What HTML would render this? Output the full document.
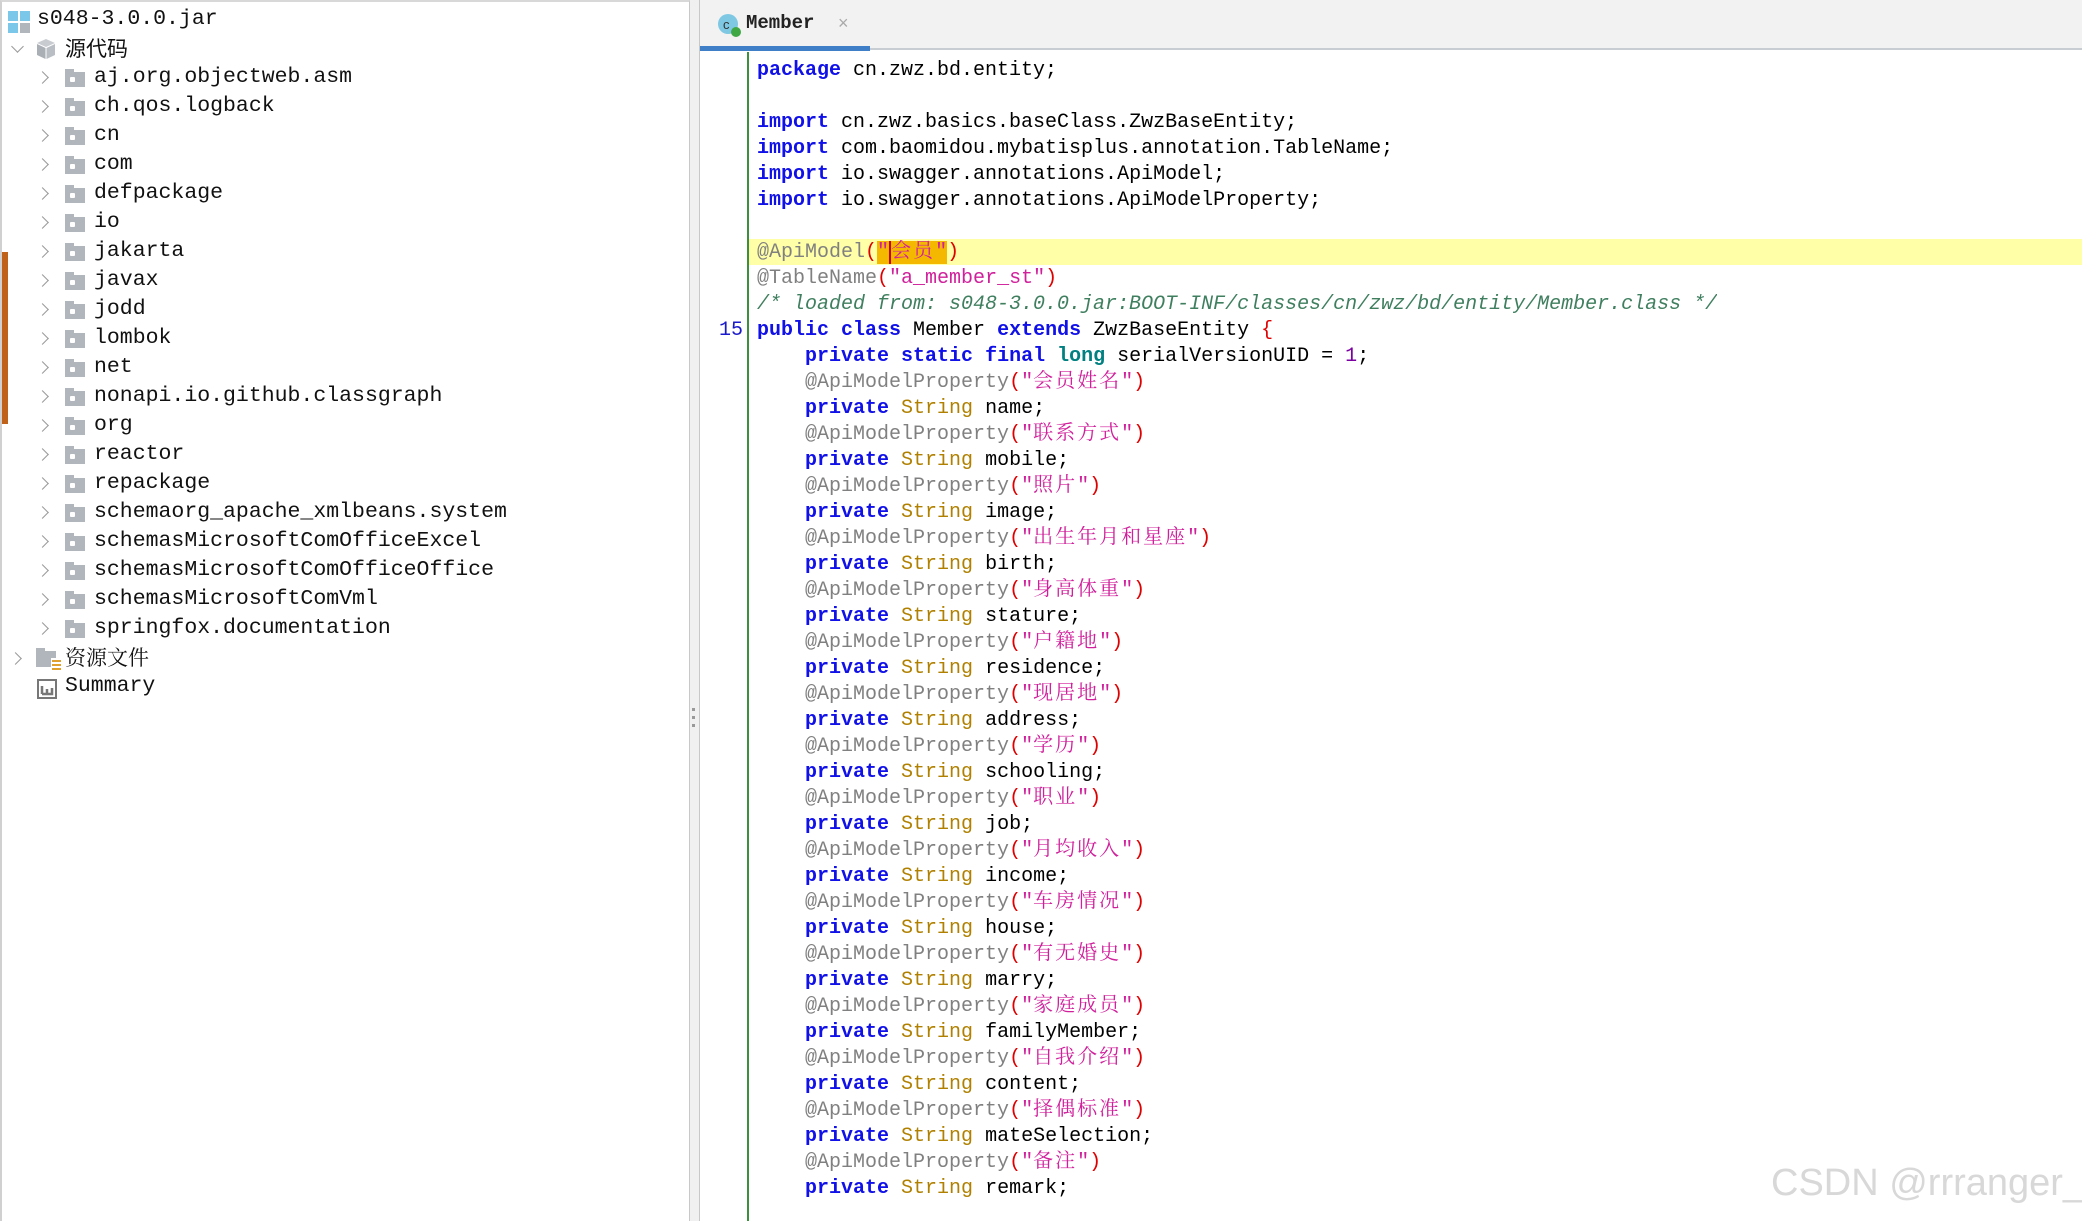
<!DOCTYPE html>
<html><head><meta charset="utf-8"><style>
*{margin:0;padding:0;box-sizing:border-box}
body{width:2082px;height:1221px;background:#fff;position:relative;overflow:hidden;font-family:"Liberation Mono","Noto Sans CJK SC",monospace}
#left{position:absolute;left:0;top:0;width:690px;height:1221px;background:#fff;border-top:2px solid #d8d8d8;border-left:2px solid #d0d0d0;border-right:1px solid #c8c8c8}
#split{position:absolute;left:690px;top:0;width:10px;height:1221px;background:#f0f0f0;border-right:1px solid #c8c8c8}
.row{position:absolute;height:29px;line-height:29px;font-size:21.5px;color:#111;white-space:pre}
.chev{position:absolute;width:9px;height:9px;border-right:1.5px solid #999;border-top:1.5px solid #999;transform:rotate(45deg)}
.fold{position:absolute;width:20px;height:15px;background:#b0b6bb}
.fold:before{content:"";position:absolute;left:0;top:-3px;width:9px;height:4px;background:#b0b6bb}
.fold:after{content:"";position:absolute;left:5px;top:5px;width:5px;height:5px;background:#fff;border-radius:1px}
#tabbar{position:absolute;left:700px;top:0;width:1382px;height:50px;background:#f2f2f2;border-bottom:2px solid #c8cdd3}
#code{position:absolute;left:757px;top:58px;font-size:20px;color:#000;white-space:pre}
.l{height:26px;line-height:26px;overflow:hidden}
.k{color:#1010e8;font-weight:bold}
.t{color:#008080;font-weight:bold}
.s{color:#b08000}
.a{color:#808080}
.q{color:#d0209c}
.p{color:#e00000}
.c{color:#3f7f5f;font-style:italic}
.n{color:#7a00a0}
.z{font-family:"Noto Serif CJK SC",serif;letter-spacing:2px;line-height:0}
</style></head><body>
<div id="left">
<div style="position:absolute;left:0;top:250px;width:6px;height:172px;background:#c0621a"></div>
<div style="position:absolute;left:6px;top:9px;width:10px;height:10px;background:#7bc7ea"></div>
<div style="position:absolute;left:18px;top:9px;width:10px;height:10px;background:#7bc7ea"></div>
<div style="position:absolute;left:6px;top:21px;width:10px;height:10px;background:#7bc7ea"></div>
<div style="position:absolute;left:18px;top:21px;width:10px;height:10px;background:#b0b6bb"></div>
<div class="row" style="left:35px;top:3px">s048-3.0.0.jar</div>
<div class="chev" style="left:11px;top:40px;transform:rotate(135deg)"></div>
<svg style="position:absolute;left:34px;top:36px" width="20" height="22" viewBox="0 0 20 22"><path d="M10 1 L19 5 L10 9 L1 5Z" fill="#c8ccd0"/><path d="M1 6 L9.5 10 L9.5 21 L1 17Z" fill="#a9afb5"/><path d="M10.5 10 L19 6 L19 17 L10.5 21Z" fill="#b8bec3"/></svg>
<div class="row" style="left:63px;top:32px;font-family:'Noto Sans CJK SC',sans-serif;font-size:21px">源代码</div>
<div id="pk"></div>
<div class="chev" style="left:9px;top:652px"></div>
<svg style="position:absolute;left:34px;top:645px" width="26" height="24"><rect x="0" y="4" width="20" height="16" fill="#b0b6bb"/><rect x="0" y="1" width="9" height="4" fill="#b0b6bb"/><rect x="15" y="11" width="11" height="13" fill="#fff"/><rect x="16" y="13" width="9" height="2" fill="#e0a030"/><rect x="16" y="17" width="9" height="2" fill="#e0a030"/><rect x="16" y="21" width="9" height="2" fill="#e0a030"/></svg>
<div class="row" style="left:63px;top:641px;font-family:'Noto Serif CJK SC',serif;font-size:21px">资源文件</div>
<svg style="position:absolute;left:35px;top:677px" width="20" height="20"><rect x="1" y="1" width="18" height="18" fill="none" stroke="#777" stroke-width="2"/><path d="M5 15 L5 7 M5 15 L15 15 L15 9 M10 15 L10 10" stroke="#777" stroke-width="2.5" fill="none"/></svg>
<div class="row" style="left:63px;top:670px">Summary</div>
</div>
<div id="split"><div style="position:absolute;left:2px;top:708px;width:3px;height:3px;background:#999"></div><div style="position:absolute;left:2px;top:716px;width:3px;height:3px;background:#999"></div><div style="position:absolute;left:2px;top:724px;width:3px;height:3px;background:#999"></div></div>
<div id="tabbar">
<svg style="position:absolute;left:18px;top:13px" width="24" height="26"><circle cx="10" cy="11" r="10" fill="#7ec8e3"/><text x="5" y="16" font-size="13" font-family="Liberation Sans" fill="#333">c</text><circle cx="18" cy="19" r="5" fill="#3fa845"/></svg>
<div style="position:absolute;left:46px;top:12px;font-size:19px;font-weight:bold;color:#222;font-family:'Liberation Mono',monospace">Member</div>
<div style="position:absolute;left:138px;top:13px;font-size:18px;color:#aaa;font-family:'Liberation Sans'">×</div>
<div style="position:absolute;left:0;top:46px;width:170px;height:5px;background:#3e7fc7"></div>
</div>
<div style="position:absolute;left:747px;top:52px;width:2px;height:1169px;background:#3c8f3c"></div>
<div style="position:absolute;left:749px;top:239px;width:1333px;height:26px;background:#ffffa8"></div>
<div style="position:absolute;left:719px;top:318px;font-size:20px;line-height:26px;color:#1a1acc;font-family:'Liberation Mono'">15</div>
<div id="code"></div>
<div style="position:absolute;left:1771px;top:1162px;font-family:'Liberation Sans',sans-serif;font-size:38px;color:#d8d8d8;white-space:nowrap">CSDN @rrranger_</div>
<script>
var pk=["aj.org.objectweb.asm","ch.qos.logback","cn","com","defpackage","io","jakarta","javax","jodd","lombok","net","nonapi.io.github.classgraph","org","reactor","repackage","schemaorg_apache_xmlbeans.system","schemasMicrosoftComOfficeExcel","schemasMicrosoftComOfficeOffice","schemasMicrosoftComVml","springfox.documentation"];
var h="";pk.forEach(function(n,i){var t=61+i*29;h+='<div class="chev" style="left:36px;top:'+(t+10)+'px"></div><div class="fold" style="left:63px;top:'+(t+9)+'px"></div><div class="row" style="left:92px;top:'+t+'px">'+n+'</div>';});
document.getElementById("pk").outerHTML=h;
function K(x){return '<span class="k">'+x+'</span>'}
function A(n,s){return '<span class="a">@'+n+'</span><span class="p">(</span><span class="q">"<span class="z">'+s+'</span>"</span><span class="p">)</span>'}
var L=[K("package")+" cn.zwz.bd.entity;","",
K("import")+" cn.zwz.basics.baseClass.ZwzBaseEntity;",
K("import")+" com.baomidou.mybatisplus.annotation.TableName;",
K("import")+" io.swagger.annotations.ApiModel;",
K("import")+" io.swagger.annotations.ApiModelProperty;","",
'<span class="a">@ApiModel</span><span class="p">(</span><span style="background:#f5b800"><span class="q">"<span style="border-left:2px solid #c00"></span><span class="z">会员</span>"</span></span><span class="p">)</span>',
'<span class="a">@TableName</span><span class="p">(</span><span class="q">"a_member_st"</span><span class="p">)</span>',
'<span class="c">/* loaded from: s048-3.0.0.jar:BOOT-INF/classes/cn/zwz/bd/entity/Member.class */</span>',
K("public")+" "+K("class")+" Member "+K("extends")+' ZwzBaseEntity <span class="p">{</span>',
"    "+K("private")+" "+K("static")+" "+K("final")+' <span class="t">long</span> serialVersionUID = <span class="n">1</span>;'];
var f=[["会员姓名","name"],["联系方式","mobile"],["照片","image"],["出生年月和星座","birth"],["身高体重","stature"],["户籍地","residence"],["现居地","address"],["学历","schooling"],["职业","job"],["月均收入","income"],["车房情况","house"],["有无婚史","marry"],["家庭成员","familyMember"],["自我介绍","content"],["择偶标准","mateSelection"],["备注","remark"]];
f.forEach(function(x){L.push("    "+A("ApiModelProperty",x[0]));L.push("    "+K("private")+' <span class="s">String</span> '+x[1]+";");});
document.getElementById("code").innerHTML=L.map(function(x){return '<div class="l">'+(x||" ")+'</div>'}).join("");
</script>
</body></html>
